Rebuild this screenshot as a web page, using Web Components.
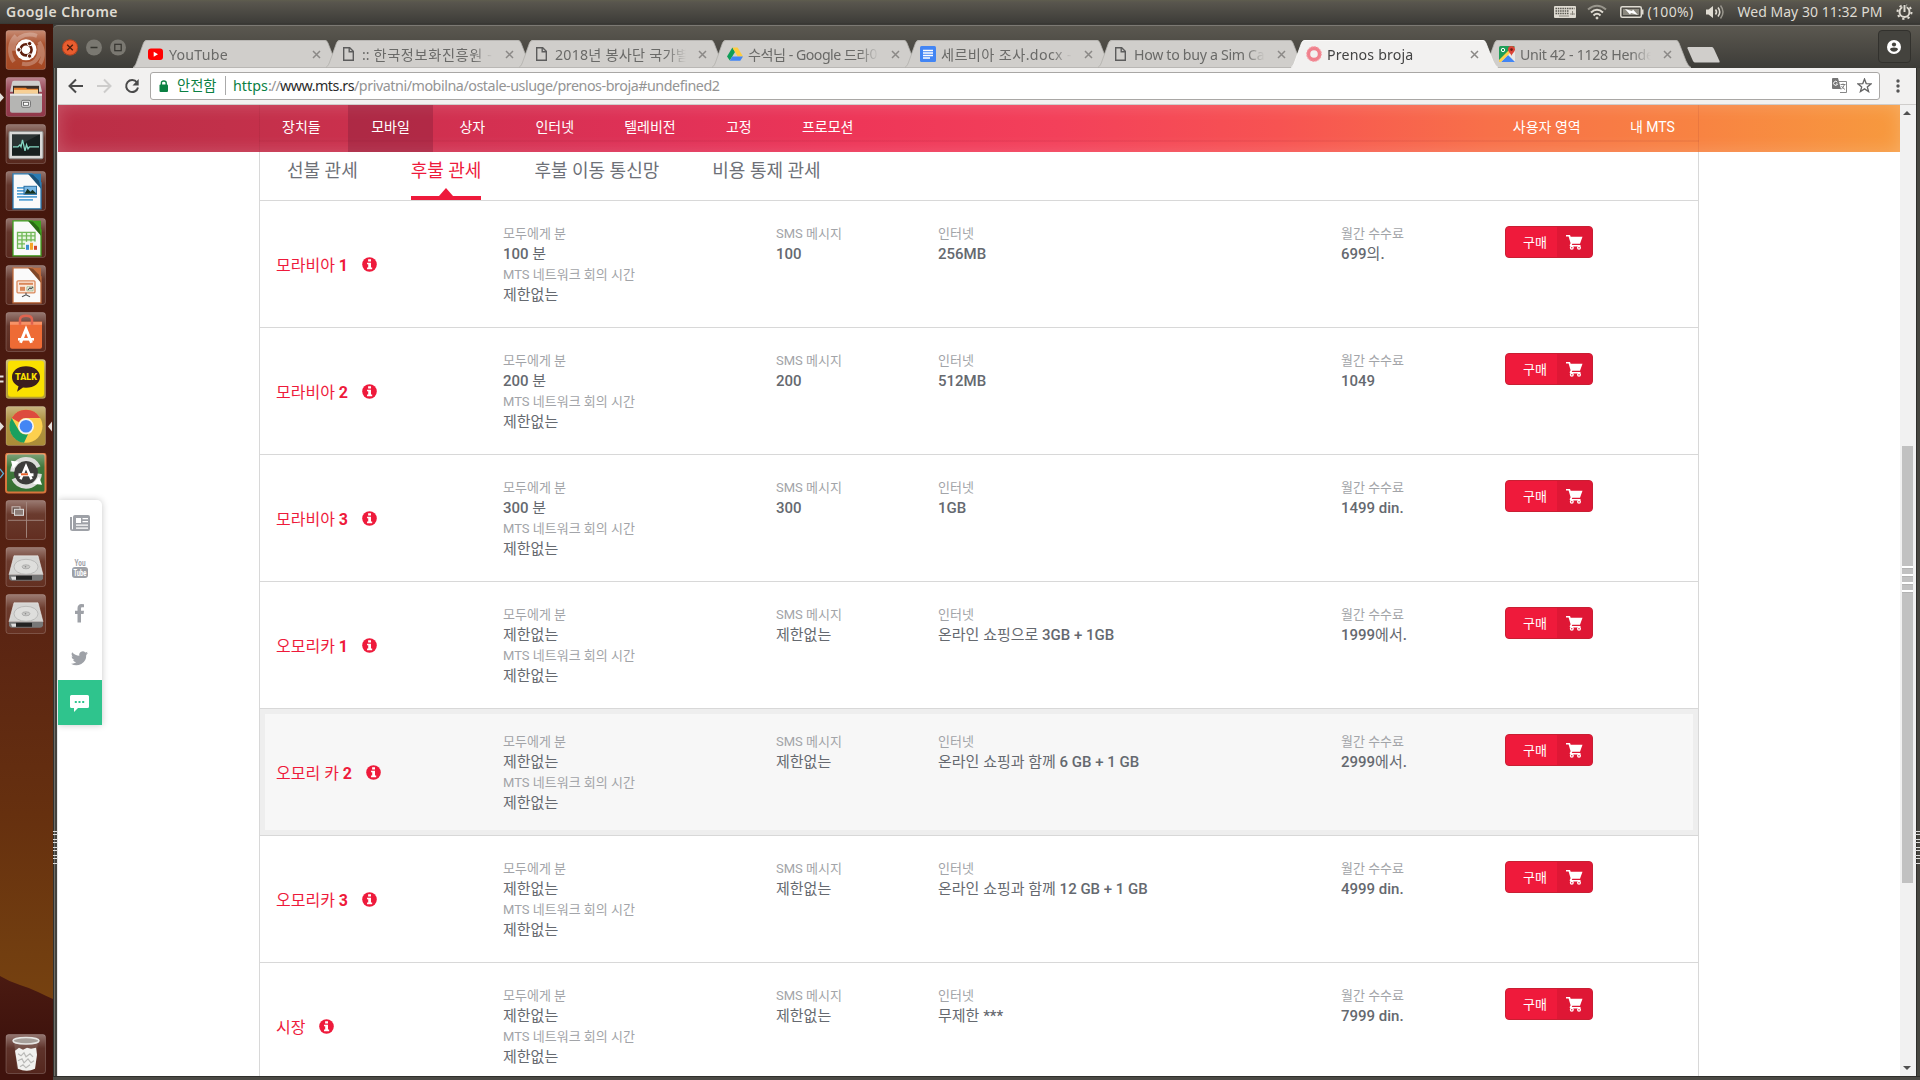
<!DOCTYPE html>
<html lang="ko">
<head>
<meta charset="utf-8">
<title>Prenos broja</title>
<style>
html,body{margin:0;height:1080px;width:1920px;overflow:hidden;background:#3c3b37;
font-family:Roboto,"Noto Sans CJK KR",sans-serif}
</style>
</head>
<body>
<desktop-shell></desktop-shell>
<script>
const UI='"Noto Sans","Noto Sans CJK KR",sans-serif';
function define(name,html,after){
  customElements.define(name,class extends HTMLElement{
    connectedCallback(){
      if(this.shadowRoot)return;
      const r=this.attachShadow({mode:'open'});
      r.innerHTML=typeof html==='function'?html(this):html;
      if(after)after(this,r);
    }
  });
}

/* Text whose tracking is tuned so that it spans the given width */
define('fit-text','<style>:host{display:inline-block;white-space:pre}</style><span><slot></slot></span>',(el,r)=>{
  const s=r.querySelector('span'),w=+el.getAttribute('w');
  const n=el.textContent.length;
  if(w)el.style.letterSpacing=((w-s.getBoundingClientRect().width)/n)+'px';
});

/* ---------- top panel ---------- */
define('os-panel',`<style>
:host{display:flex;height:24px;align-items:center;box-sizing:border-box;padding:0 7.500px 0 6px;color:#dfdbd2;
background:linear-gradient(#5f5d4e 0,#59564e 2px,#3d3c38 23px,#35342f);font:14px/24px ${UI}}
b{font-weight:600}.sp{flex:1}svg{display:block;flex:none}
</style>
<b><fit-text w="112">Google Chrome</fit-text></b><span class="sp"></span>
<svg width="22" height="14" viewBox="0 0 22 14"><rect y="1" width="22" height="12" rx="1" fill="#dfdbd2"/><path d="M1.500 3.500h19M1.500 6h13M1.500 8.500h13" stroke="#5a5851" stroke-width="1.500" stroke-dasharray="1.500 .8"/><path d="M16 9h5M18.500 6v4M5 11h10" stroke="#8b877e"/></svg>
<svg width="20" height="16" viewBox="0 0 20 16" style="margin-left:11px" fill="none" stroke-width="2"><path d="M1 5.500Q10-2 19 5.500" stroke="#98958c"/><path d="M4 8.500Q10 3 16 8.500" stroke="#dfdbd2"/><path d="M6.500 11.500Q10 8 13.500 11.500" stroke="#dfdbd2"/><circle cx="10" cy="14" r="1" fill="#dfdbd2" stroke="#dfdbd2" stroke-width="1"/></svg>
<svg width="24" height="14" viewBox="0 0 24 14" style="margin-left:13px"><rect x=".8" y="1.800" width="20.500" height="10.500" rx="1.500" fill="none" stroke="#dfdbd2" stroke-width="1.500"/><rect x="3" y="4" width="16" height="6" fill="#8c897f"/><path d="M22 4.500h1.500v5H22z" fill="#dfdbd2"/><path d="M5 4l7 2 1-1.500 5 5.500-7-2-1 1.500z" fill="#fff"/></svg>
<fit-text w="46" style="margin-left:4px">(100%)</fit-text>
<svg width="20" height="16" viewBox="0 0 20 16" style="margin-left:11px"><path d="M1 5.500h2.500L8 2v12L3.500 10.500H1z" fill="#dfdbd2"/><path d="M10.500 5.500q2 2.500 0 5M13 3.500q3.500 4.500 0 9" stroke="#dfdbd2" fill="none" stroke-width="1.600"/><path d="M15.500 1.500q5 6.500 0 13" stroke="#98958c" fill="none" stroke-width="1.500"/></svg>
<fit-text w="145" style="margin-left:13px">Wed May 30 11:32 PM</fit-text>
<svg width="17" height="18" viewBox="0 0 17 18" style="margin-left:13px" fill="none" stroke="#dfdbd2"><circle cx="8.500" cy="9" r="5" stroke-width="2"/><circle cx="8.500" cy="9" r="7" stroke-width="2" stroke-dasharray="2.300 3.200"/><path d="M8.500 1v8" stroke="#474640" stroke-width="4"/><path d="M8.500 2v7" stroke-width="2"/></svg>`);

/* ---------- launcher ---------- */
const doc=(c,inner)=>`<path d="M7 3h19l9 9v26H7z" fill="#fafafa" stroke="${c}" stroke-width="1.300"/><path d="M22 3h13v15z" fill="${c}"/><path d="M22 3l13 15-2-8-6-6z" fill="#0005"/>${inner}`;
const disk='<path d="M8 9h24l5 19H3z" fill="#d5d5d3" stroke="#eee" stroke-width=".6"/><path d="M3 28h34v4q-1 2-3 2H6q-2 0-3-2z" fill="#777"/><path d="M5 30h5v3H6z" fill="#ddd"/><path d="M10 29h16v4H10z" fill="#222"/><ellipse cx="20" cy="20" rx="12" ry="7.500" fill="#dededc" stroke="#b3b3b1" stroke-width=".8"/><ellipse cx="20" cy="20" rx="4" ry="2" fill="#c9c9c7" stroke="#999" stroke-width=".6"/><circle cx="19.500" cy="20" r=".8" fill="#888"/>';
const LICON={
ubuntu:'<path d="M7 21C7 9 18 2 31 6M33 15c3 14-6 21-17 19M10 6C3 12 2 24 8 32M34 34c4-6 4-15-1-22" stroke="#ffffff42" stroke-width="4" fill="none"/><circle cx="20" cy="20" r="10.500" fill="#fff"/><circle cx="20" cy="20" r="5.600" fill="none" stroke="#5e1f0e" stroke-width="2.600"/><g fill="#5e1f0e" stroke="#fff" stroke-width="1"><circle cx="12.800" cy="20" r="2.200"/><circle cx="23.600" cy="13.800" r="2.200"/><circle cx="23.600" cy="26.200" r="2.200"/></g>',
files:'<path d="M6 6q0-2 2-2h24q2 0 2 2l2 9H4z" fill="#cfcfcd"/><path d="M7 9h26v8H7z" fill="#3a2f28"/><path d="M8 11h12l1 1h11v5H8z" fill="#e8812c"/><path d="M8 13h24v5H8z" fill="#f6cf95"/><path d="M4 17h32v17q0 2-2 2H6q-2 0-2-2z" fill="#b5b5b3"/><path d="M4 17h32v2H4z" fill="#e8e8e6"/><rect x="15.500" y="23.500" width="9" height="7" rx="1.500" fill="#ddd" stroke="#777"/><rect x="17.500" y="25.500" width="5" height="3" fill="#fff" stroke="#555" stroke-width=".8"/>',
monitor:'<rect x="3" y="7.500" width="34" height="27.500" rx="1.500" fill="#d9d9d7" stroke="#8a8a88"/><rect x="6" y="10.500" width="28" height="21.500" fill="#17201f"/><path d="M6 10.500h28L6 25z" fill="#ffffff18"/><path d="M7 23h5l2-2 1 2 1.500-7 2.500 11 1.500-6 1.500 4 1.500-2H33" fill="none" stroke="#86d8c4" stroke-width="1.300"/>',
writer:doc('#2a7cb4','<path d="M11 17h20M11 20h20M11 23h20M11 26h20M13 29h14" stroke="#5aa4d6" stroke-width="1.800"/><rect x="18" y="15.500" width="12.500" height="8" fill="#79b7e4" stroke="#2a6ea2"/><path d="M18.500 23l3-5 3 3 2-2 4 4z" fill="#153321"/>'),
calc:doc('#3fa11f','<path d="M11 14h18v17H11z" fill="#e8f5e0"/><path d="M11 14.500h18M11 18h18M11 22h18M11 26h18M11 30.500h10M11.500 14v17M16 14v17M20.500 14v17M25 14v10M29 14v10" stroke="#71b857" stroke-width="1.300"/><rect x="19" y="24" width="12" height="8" fill="#f5f5f5"/><path d="M20 32v-5h3v5" fill="#3c8fd0"/><path d="M24 32v-7h3v7" fill="#f5a52b"/><path d="M28 32v-4h3v4" fill="#d3482c"/>'),
impress:doc('#bf6b3c','<rect x="11" y="16" width="18" height="12" rx="1" fill="#fbe7da" stroke="#d9875a" stroke-width="1.300"/><path d="M13 19h14" stroke="#d9875a" stroke-width="2"/><path d="M14 22h5v4h-5z" fill="#d9875a"/><path d="M21 22h6v4h-6z" fill="#fff" stroke="#6a9e62" stroke-width=".6"/><path d="M22 25l2-2 1 1 2-2M20 28v2M16 32l4-2 4 2" fill="none" stroke="#555" stroke-width="1.200"/>'),
store:'<path d="M4 10h32v25q0 2-2 2H6q-2 0-2-2z" fill="#ee6b35"/><path d="M4 10h32v3H4z" fill="#f79267"/><path d="M14 13V8q0-4 6-4t6 4v5" fill="none" stroke="#e0634f" stroke-width="2.500"/><path d="M14.500 31L20 17.500 25.500 31" fill="none" stroke="#fff" stroke-width="3"/><path d="M12 27.500h16" stroke="#fff" stroke-width="2.600"/>',
talk:'<rect x="2" y="2" width="36" height="36" rx="3" fill="#fae100"/><path d="M20 7.500c8.300 0 14 4.600 14 10.700S28.300 29 20 29l-3-.3L11 33l1.500-5.500C8.500 25.600 6 22.300 6 18.200 6 12.100 11.700 7.500 20 7.500z" fill="#3b1e1e"/><text x="20" y="21.500" text-anchor="middle" font-family="Roboto" font-weight="900" font-size="9" fill="#fae100">TALK</text>',
chrome:'<circle cx="20" cy="20.500" r="16.500" fill="#fdd04e"/><path d="M20 4a16.500 16.500 0 0 1 14.300 8.250H20a8.250 8.250 0 0 0-7.100 4.100L5.700 12.200A16.500 16.500 0 0 1 20 4z" fill="#dd4b3e"/><path d="M5.700 12.200L12.900 24.600A8.250 8.250 0 0 0 20 28.700a8 8 0 0 0 2-.3L18 37A16.500 16.500 0 0 1 5.700 12.200z" fill="#1aa05f"/><circle cx="20" cy="20.500" r="8" fill="#f4f4f4"/><circle cx="20" cy="20.500" r="6.300" fill="#4486f4"/>',
updater:'<circle cx="20" cy="20" r="12" fill="#3c3c3a"/><circle cx="20" cy="20" r="13.800" fill="none" stroke="#dcdcda" stroke-width="4.200" stroke-dasharray="36 7.350" stroke-dashoffset="-1"/><path d="M5 8l8 1-6 7zM36 32l-9-1 6-7z" fill="#fff"/><path d="M14.500 26.500L20 13.500l5.500 13" fill="none" stroke="#fff" stroke-width="2.600"/><path d="M12.500 22h15" stroke="#fff" stroke-width="3"/><path d="M15 21.500h7" stroke="#e9632c" stroke-width="2"/>',
workspace:'<path d="M20.500 2v36M2 20.500h36" stroke="#a58a82" stroke-width=".9"/><rect x="6" y="7" width="8" height="6.500" fill="#6d5750" stroke="#cbbdb8"/><rect x="8.500" y="9.500" width="9" height="6" fill="#8d7d78" stroke="#ddd"/>',
disk,
trash:'<path d="M8 8h24l-3 27q-9 4-18 0z" fill="#8d736c77"/><path d="M9 17l4-3 4 2 4-2 4 1 5-1 1 7-2 14q-8 4-17 0z" fill="#f1f1ef"/><path d="M12 20l3 2 3-3 2 4 4-3 3 3M12 27l4-2 2 4 4-4 3 4 3-2M14 33l3-2 3 3 4-3" fill="none" stroke="#b9b9b7" stroke-width="1.200"/><ellipse cx="20" cy="7" rx="13" ry="3.200" fill="#a7a09b" stroke="#e7e7e5" stroke-width="1.500"/>'};
define('launcher-item',el=>{
  const k=el.getAttribute('icon'),m=el.getAttribute('mark')||'';
  const marks={run:'<path d="M0 16l4 4.500-4 4.500z" fill="#e4e0dc"/>',two:'<path d="M0 17.500h3.500M0 22.500h3.500" stroke="#e4e0dc" stroke-width="2"/>',
    active:'<path d="M0 16l4 4.500-4 4.500z" fill="#e4e0dc"/><path d="M52 15.500l-4 5 4 5z" fill="#e4e0dc"/>',blue:'<path d="M0 16l3.500 4.500L0 25" fill="none" stroke="#5aaad0" stroke-width="1.300"/>'};
  return `<style>:host{display:block;height:41px}svg{display:block}</style>
<svg width="53" height="41" viewBox="0 0 53 41">
<defs><linearGradient id="g" x2="0" y2="1"><stop stop-color="#fff" stop-opacity=".38"/><stop offset=".35" stop-color="#fff" stop-opacity=".08"/><stop offset="1" stop-color="#fff" stop-opacity=".02"/></linearGradient></defs>
${marks[m]||''}<rect x="6" y=".5" width="39.500" height="39" rx="2.500" fill="${el.getAttribute('tint')||'#6d3a2c66'}" stroke="${k==='updater'?'#d8743a':'#ffffff30'}" ${k==='updater'?'stroke-width="2"':''}/>
<rect x="6" y=".5" width="39.500" height="39" rx="2.500" fill="url(#g)"/>
<g transform="translate(6,-.2)">${LICON[k]}</g></svg>`});
define('unity-launcher',`<style>
:host{display:flex;flex-direction:column;gap:6px;box-sizing:border-box;width:53px;height:1056px;padding:6px 0 5px;
background:linear-gradient(#401409 0,#4a1a10 330px,#5a2413 600px,#66300f 790px,#723e10 930px,#784310 1000px)}
.sp{flex:1;display:flex;align-items:flex-end;margin:0 0 -53px}.sp svg{display:block}
launcher-item{position:relative}
</style>
<launcher-item icon="ubuntu" tint="#a4441e"></launcher-item><launcher-item icon="files" tint="#8f3446" mark="run"></launcher-item>
<launcher-item icon="monitor"></launcher-item><launcher-item icon="writer"></launcher-item><launcher-item icon="calc"></launcher-item>
<launcher-item icon="impress"></launcher-item><launcher-item icon="store"></launcher-item>
<launcher-item icon="talk" tint="#b39d2e" mark="two"></launcher-item><launcher-item icon="chrome" tint="#a98a33" mark="active"></launcher-item>
<launcher-item icon="updater" tint="#2f6d2c" mark="blue"></launcher-item><launcher-item icon="workspace"></launcher-item>
<launcher-item icon="disk"></launcher-item><launcher-item icon="disk"></launcher-item>
<div class="sp"><svg width="53" height="110" viewBox="0 0 53 110"><defs><linearGradient id="h" x2="0" y2="1"><stop stop-color="#4a1a11"/><stop offset=".6" stop-color="#3f130d"/></linearGradient></defs><path d="M0 5Q10 11 20 14T38 21T53 28V110H0z" fill="url(#h)"/></svg></div>
<launcher-item icon="trash"></launcher-item>`);

/* ---------- browser tabs ---------- */
const page='<svg width="15" height="16" viewBox="0 0 15 16"><path d="M2.700 1.700h6l3.600 3.600v9H2.700z" fill="none" stroke="#5c5c5c" stroke-width="1.400"/><path d="M8.200 1.700v4h4" fill="none" stroke="#5c5c5c" stroke-width="1.400"/></svg>';
const FAV={page,
yt:'<svg width="15" height="16" viewBox="0 0 15 16"><rect y="2.500" width="15" height="11.500" rx="3" fill="#f00"/><path d="M5.700 5.700l4.300 2.500-4.300 2.600z" fill="#fff"/></svg>',
drive:'<svg width="16" height="16" viewBox="0 0 16 16"><path d="M5.400 1.500L8 6 2.800 14.500 0 10.500z" fill="#0f9d58"/><path d="M5.400 1.500h5.200l5.400 9h-5.300z" fill="#ffcd40"/><path d="M5.200 10.500H16l-2.700 4.200H2.800z" fill="#4285f4"/></svg>',
docs:'<svg width="16" height="16" viewBox="0 0 16 16"><rect width="16" height="16" rx="1.500" fill="#4285f4"/><path d="M3 4.500h10M3 7h10M3 9.500h10M3 12h7" stroke="#fff" stroke-width="1.300"/></svg>',
mts:'<svg width="16" height="16" viewBox="0 0 16 16"><circle cx="8" cy="8" r="5.600" fill="none" stroke="#f0808c" stroke-width="3.600"/><circle cx="8" cy="8" r="7.300" fill="none" stroke="#f5a3ab" stroke-width="1.200" stroke-dasharray="1.500 1.370"/></svg>',
maps:'<svg width="16" height="16" viewBox="0 0 16 16"><rect width="16" height="16" rx="1.500" fill="#1e9e58"/><path d="M0 16L16 1v15z" fill="#e9e9e7"/><path d="M9 9l7 7H2z" fill="#4285f4"/><path d="M0 14L11 3l2 2L2 16H0z" fill="#ffd04b"/><circle cx="4" cy="4" r="1.700" fill="none" stroke="#fff"/><path d="M12.500 0a3.500 3.500 0 0 1 3.500 3.600c0 2.400-2.600 3.400-3.500 6.400-.9-3-3.500-4-3.500-6.400A3.500 3.500 0 0 1 12.500 0z" fill="#db4437"/><circle cx="12.500" cy="3.600" r="1.300" fill="#6e1a12"/></svg>'};
define('browser-tab',el=>{
 const on=el.hasAttribute('active');
 return `<style>
:host{display:flex;position:relative;z-index:${on?2:1};width:193px;height:28px;box-sizing:border-box;padding-left:15px;align-items:center;flex:none;color:${on?'#444':'#6a6a68'};font:14.200px/27px ${UI}}
.bg{position:absolute;left:0;top:0}
.ic{width:16px;margin-right:5px;position:relative;display:flex}
.t{width:131px;overflow:hidden;white-space:pre;position:relative;-webkit-mask:linear-gradient(90deg,#000 111px,transparent 131px)}
.x{margin-left:12px;position:relative;display:block;margin-top:0}
</style>
<svg class="bg" width="208" height="28" viewBox="0 0 208 28"><path d="M0 28C2 26 3 24 4 21L10.500 3Q11.500 0 14 0H192Q194 0 195 3L202 21Q204 26 207 28z" fill="${on?'#f2f1f0':'#d0cecb'}"/><path d="M0 27.500C2 26 3 24 4 21L10.500 3Q11.500.5 14 .5H192Q194 .5 195 3L202 21Q204 26 207 27.500${on?'':'z'}" fill="none" stroke="${on?'#fbfbfa':'#b3b1ad'}" stroke-width=".8"/></svg>
<span class="ic">${FAV[el.getAttribute('icon')]}</span><span class="t"><slot></slot></span>
<svg class="x" width="9" height="9" viewBox="0 0 9 9"><path d="M1 1l7 7M8 1L1 8" stroke="#8b8987" stroke-width="1.500"/></svg>`});
define('tab-strip',`<style>
:host{display:flex;height:43px;background:linear-gradient(#5b5850,#3d3c38);border-radius:5px 0 0 0;box-sizing:border-box;border-top:1px solid #7c7973;align-items:flex-end;overflow:hidden}
.w{display:flex;gap:8px;width:80px;padding:0 0 12px 9px;box-sizing:border-box}
.w svg{display:block}.sp{flex:1}
.n{margin:0 0 5px 10px;display:block}
.u{width:33px;height:33px;border:1px solid #32312d;border-radius:4px;margin:0 9.500px 5px 0;box-sizing:border-box;background:#44433e;display:flex;align-items:center;justify-content:center}
</style>
<div class="w">
<svg width="16" height="17" viewBox="0 0 16 17"><circle cx="8" cy="8.500" r="8" fill="#ea5d2f"/><circle cx="8" cy="8.500" r="7.600" fill="none" stroke="#8b3217" stroke-width=".6"/><path d="M5.200 5.700l5.600 5.600M10.800 5.700l-5.600 5.600" stroke="#4d1d0c" stroke-width="1.300"/></svg>
<svg width="16" height="17" viewBox="0 0 16 17"><circle cx="8" cy="8.500" r="8" fill="#7a7871"/><path d="M4.500 8.500h7" stroke="#35342f" stroke-width="1.300"/></svg>
<svg width="16" height="17" viewBox="0 0 16 17"><circle cx="8" cy="8.500" r="8" fill="#7a7871"/><rect x="4.800" y="5.300" width="6.400" height="6.400" fill="none" stroke="#35342f" stroke-width="1.200"/></svg>
</div>
<browser-tab icon="yt"><fit-text w="59">YouTube</fit-text></browser-tab>
<browser-tab icon="page"><fit-text w="11.500">:: </fit-text><fit-text w="119">한국정보화진흥원 -</fit-text></browser-tab>
<browser-tab icon="page"><fit-text w="134">2018년 봉사단 국가별</fit-text></browser-tab>
<browser-tab icon="drive"><fit-text w="146">수석님 - Google 드라이브</fit-text></browser-tab>
<browser-tab icon="docs"><fit-text w="131">세르비아 조사.docx -</fit-text></browser-tab>
<browser-tab icon="page"><fit-text w="144">How to buy a Sim Card</fit-text></browser-tab>
<browser-tab icon="mts" active><fit-text w="86.500">Prenos broja</fit-text></browser-tab>
<browser-tab icon="maps"><fit-text w="154">Unit 42 - 1128 Henderso</fit-text></browser-tab>
<svg class="n" width="34" height="16" viewBox="0 0 34 16"><path d="M1 0H25Q26 0 27 2L32.500 14Q33 15.500 32 15.500H8Q7 15.500 6 14L.5 1.500Q.2.200 1 0z" fill="#d0cecb"/></svg>
<span class="sp"></span>
<div class="u"><svg width="14" height="14" viewBox="0 0 14 14"><circle cx="7" cy="7" r="7" fill="#fff"/><circle cx="7" cy="4.500" r="2.100" fill="#44433e"/><path d="M3 9.500q0-2 4-2t4 2q-1.500 2.300-4 2.300T3 9.500z" fill="#44433e"/></svg></div>`);

/* ---------- toolbar ---------- */
define('browser-toolbar',`<style>
:host{display:flex;height:37px;box-sizing:border-box;background:#f2f1f0;border-bottom:1px solid #cfcdcb;align-items:center;padding:0 0 1px 10px;font:14.300px/26px ${UI}}
svg{display:block;flex:none}
.o{flex:1;display:flex;align-items:center;height:28px;box-sizing:border-box;border:1px solid #a9a7a5;border-radius:3px;background:#fff;margin-left:10px;padding:0 9px 0 8px;color:#949494;white-space:pre}
.g{color:#0b8043}.d{color:#2b2b2b}.s{flex:1}i{width:1px;height:19px;background:#aaa;margin:0 7px 0 9px}
.m{width:36px;display:flex;justify-content:center}
</style>
<svg width="16" height="16" viewBox="0 0 16 16" fill="none" stroke="#4a4a4a" stroke-width="2"><path d="M15 8H2M8 1.500L1.500 8 8 14.500"/></svg>
<svg width="16" height="16" viewBox="0 0 16 16" fill="none" stroke="#cdcccb" stroke-width="2" style="margin-left:12px"><path d="M1 8h13M8 1.500L14.500 8 8 14.500"/></svg>
<svg width="16" height="16" viewBox="0 0 16 16" fill="none" stroke="#4a4a4a" stroke-width="2" style="margin-left:12px"><path d="M13 4.500A6 6 0 1 0 14 9.500"/><path d="M14.700 1v6.500H8.500z" fill="#4a4a4a" stroke="none"/></svg>
<div class="o">
<svg width="10" height="12" viewBox="0 0 10 12"><rect x=".5" y="4.500" width="8.500" height="7.500" rx="1" fill="#0b8043"/><path d="M2.400 5V3q0-2 2.400-2t2.400 2v2" fill="none" stroke="#0b8043" stroke-width="1.400"/></svg>
<span class="g" style="margin-left:8px;width:39px">안전함</span><i></i>
<fit-text class="g" w="35">https</fit-text><fit-text w="12">://</fit-text><fit-text class="d" w="74">www.mts.rs</fit-text><fit-text w="365.500">/privatni/mobilna/ostale-usluge/prenos-broja#undefined2</fit-text>
<span class="s"></span>
<svg width="15" height="15" viewBox="0 0 15 15"><path d="M0 1q0-1 1-1h5l3 11H1q-1 0-1-1z" fill="#757575"/><path d="M7 3.500h7.500v11H8" fill="none" stroke="#888"/><path d="M5.300 4.200A2 2 0 1 0 5.500 6H4" fill="none" stroke="#fff"/><path d="M8.500 6.500h5M11 5.500v1M12.500 6.500q-1 3-3.500 5M9.500 8q1 2 3.500 3.500" fill="none" stroke="#777" stroke-width=".9"/></svg>
<svg width="15" height="15" viewBox="0 0 15 15" style="margin:0 -2px 0 10px"><path d="M7.500 1l1.700 4.600 4.900.2-3.800 3.100 1.300 4.700-4.100-2.700-4.100 2.700 1.300-4.700L.9 5.800l4.900-.2z" fill="none" stroke="#666" stroke-width="1.300"/></svg>
</div>
<div class="m"><svg width="4" height="14" viewBox="0 0 4 14" fill="#555"><circle cx="2" cy="2" r="1.700"/><circle cx="2" cy="7" r="1.700"/><circle cx="2" cy="12" r="1.700"/></svg></div>`);

/* ---------- site ---------- */
define('site-nav',`<style>
:host{display:flex;height:47px;box-sizing:border-box;padding:0 201px 0 201px;color:#fff;font:14px/44px Roboto,"Noto Sans CJK KR",sans-serif;
box-shadow:inset 0 0 18px rgba(255,255,255,.2);
background:linear-gradient(90deg,rgba(110,20,30,.12) 1px,transparent 1px 1439px,rgba(110,20,30,.1) 1439px) 201px 0/1440px 47px no-repeat,
linear-gradient(rgba(120,20,40,.07),rgba(120,20,40,.07)) 201px 35px/1440px 2px no-repeat,
linear-gradient(90deg,#ba2e45 0,#c2304a 170px,#d0304f 375px,#e03157 600px,#ee3658 800px,#f3405a 1000px,#f75352 1220px,#f87049 1430px,#f88342 1640px,#f79a3e 1842px)}
span{padding:0 23px;margin-right:4.200px;white-space:pre}.on{background:rgba(120,30,55,.35)}i{flex:1}
</style><span style="padding-right:23.300px">장치들</span><span class="on">모바일</span><span style="margin-left:-.5px">상자</span><span>인터넷</span><span>텔레비전</span><span>고정</span><span>프로모션</span><i></i><span style="padding-right:22px">사용자 영역</span><span style="padding-right:20px">내 MTS</span>`);
define('tariff-tabs',`<style>
:host{display:flex;gap:53px;height:48px;padding-left:27px;font:18px/38px Roboto,"Noto Sans CJK KR",sans-serif;color:#6d7077}
span{white-space:pre;height:48px;box-sizing:border-box}
.on{color:#ee1a3b;position:relative;border-bottom:4px solid #ee1a3b}
.on:after{content:"";position:absolute;left:50%;margin-left:-7px;bottom:0;border:7.500px solid transparent;border-top:0;border-bottom:8px solid #ee1a3b}
</style><span>선불 관세</span><span class="on">후불 관세</span><span>후불 이동 통신망</span><span>비용 통제 관세</span>`);
define('buy-button',`<style>
:host{display:flex;width:88px;height:32px;box-sizing:border-box;border:1px solid #c91f33;border-radius:4px;overflow:hidden;background:#ef1a3b;color:#fff;font:13px/31px Roboto,"Noto Sans CJK KR",sans-serif}
span{width:51px;padding-left:17px;box-sizing:border-box}
div{flex:1;background:#df1735;display:flex;align-items:center;justify-content:center}
</style><span><slot></slot></span><div><svg width="17" height="15" viewBox="0 0 17 15"><path d="M0 0h4l.7 1.800H16.500L14 8.800H6.300L5.800 10H14.500v1.500H4.200L3.600 10.300l1-2L2.600 1.500H0z" fill="#fff"/><circle cx="5.800" cy="12.700" r="2" fill="#fff"/><circle cx="13" cy="12.700" r="2" fill="#fff"/><circle cx="5.800" cy="12.700" r=".7" fill="#df1735"/><circle cx="13" cy="12.700" r=".7" fill="#df1735"/></svg></div>`);
define('tariff-row',el=>{
 /* Hangul runs take the regular weight, Latin runs keep the medium one */
 const a=n=>(el.getAttribute(n)||'').replace(/[\uac00-\ud7a3]+/g,'<em>$&</em>');
 return `<style>
:host{display:grid;grid-template-columns:227px 273px 162px 403px 164px 1fr;height:127px;box-sizing:border-box;border-top:1px solid #d8d8d8;padding:22px 0 0 16px;font:500 15px/20.500px Roboto,"Noto Sans CJK KR",sans-serif;color:#65696f}
:host([hover]){background:#f7f7f7;box-shadow:inset 0 0 0 5px #eee}
em{font-style:normal;font-weight:400}
small{display:block;font-size:13px;font-weight:400;color:#a2a4a8;line-height:22px;height:20.500px}
.n{color:#ee1a3b;font-size:16px;display:flex;padding-top:33px;align-items:center;height:21px}
.n b{font-weight:700;white-space:pre}
.n svg{margin:-4px 0 0 14px}
buy-button{margin-top:3px}div{white-space:pre}
</style>
<div class="n"><span>${a('name')}</span><b>${a('num')?' '+a('num'):''}</b><svg width="15" height="15" viewBox="0 0 14 14"><circle cx="7" cy="7" r="6.800" fill="#ee1a3b"/><path d="M5.700 2h2.700v2.200H5.700zM4.700 5.300h3.700v4.600h1.100v1.500H4.700V9.900h1.100V6.800H4.700z" fill="#fff"/></svg></div>
<div><small>모두에게 분</small>${a('min')}<small>MTS 네트워크 회의 시간</small><em>제한없는</em></div>
<div><small>SMS 메시지</small>${a('sms')}</div>
<div><small>인터넷</small>${a('net')}</div>
<div><small>월간 수수료</small>${a('fee')}</div>
<div><buy-button>구매</buy-button></div>`});
define('side-dock',`<style>
:host{position:absolute;left:0;top:395px;width:44px;height:225px;background:#fff;border-radius:0 5px 0 0;box-shadow:0 0 7px rgba(0,0,0,.22);display:flex;flex-direction:column}
div{height:45px;display:flex;align-items:center;justify-content:center;box-sizing:border-box;padding:1px 1px 0 0}.c{background:#2fc48d}
svg{overflow:visible}
</style>
<div><svg width="20" height="17" viewBox="0 0 20 17"><path d="M5 0h13q2 0 2 2v12q0 2-2 2H2.500Q0 16 0 13.500V2h2v11.500q0 1 1 1V2q0-2 2-2z" fill="#9ea1a7"/><path d="M6 3h5v5H6zM12.500 3H18v1.300h-5.500zM12.500 6H18v1.300h-5.500zM6 9.500h12v1.300H6zM6 12.500h12v1.300H6z" fill="#fff"/></svg></div>
<div><svg width="18" height="24" viewBox="0 -2 18 24" font-family="Roboto" font-weight="700" fill="#9ea1a7"><text x="3.500" y="8" font-size="9" textLength="11" lengthAdjust="spacingAndGlyphs">You</text><rect x="1" y="9" width="16" height="11" rx="3"/><text x="2.500" y="18" font-size="9.500" fill="#fff" textLength="13" lengthAdjust="spacingAndGlyphs">Tube</text></svg></div>
<div><svg width="10" height="19" viewBox="0 0 10 19"><path d="M9 .2V3.300H7.200C6.100 3.300 6 4 6 4.800V6.700h3l-.4 3.300H6v8.500H2.500V10H0V6.700h2.500V4.300C2.500 1.700 4 0 6.500 0z" fill="#9ea1a7"/></svg></div>
<div><svg width="17" height="15" viewBox="0 0 24 20"><path d="M23.900 2.400a10 10 0 0 1-2.800.8A4.900 4.900 0 0 0 23.300.4a10 10 0 0 1-3.100 1.200 4.900 4.900 0 0 0-8.400 4.500A14 14 0 0 1 1.700 1a4.900 4.900 0 0 0 1.500 6.500A4.900 4.900 0 0 1 1 6.900a4.900 4.900 0 0 0 3.900 4.900 5 5 0 0 1-2.200.1 4.900 4.900 0 0 0 4.600 3.400A9.900 9.900 0 0 1 0 17.300a14 14 0 0 0 21.500-12.400 10 10 0 0 0 2.400-2.500z" fill="#9ea1a7"/></svg></div>
<div class="c"><svg width="19" height="17" viewBox="0 0 19 17"><path d="M1.500 0h16q1.500 0 1.500 1.500v10q0 1.500-1.500 1.500H8l-4 4v-4H1.500Q0 13 0 11.500v-10Q0 0 1.500 0z" fill="#fff"/><path d="M4.800 6h2v2h-2zM8.500 6h2v2h-2zM12.200 6h2v2h-2z" fill="#2fc48d"/></svg></div>`);
define('scroll-bar',`<style>
:host{display:flex;flex-direction:column;width:16px;background:#f1f1f1}
.a{height:16px;display:flex;align-items:center;justify-content:center;padding-right:2px}
.t{margin:325px 0 0 2px;width:11px;height:437px;background:#c1c1c1;display:flex;flex-direction:column;align-items:center;box-sizing:border-box;padding-top:120px;gap:6px}
.t b{width:11px;height:2px;background:#fff;box-shadow:0 1px #9995}.s{flex:1}
</style><div class="a"><svg width="8" height="4"><path d="M0 4l4-4 4 4z" fill="#505050"/></svg></div>
<div class="t"><b></b><b></b><b></b><b></b></div><i class="s"></i><div class="a"><svg width="8" height="4"><path d="M0 0l4 4 4-4z" fill="#505050"/></svg></div>`);
define('web-page',`<style>
:host{display:flex;height:971px;background:#fff;position:relative;overflow:hidden}
.v{width:1842px;height:971px;overflow:hidden;background:#fff}
.c{width:1440px;box-sizing:border-box;margin-left:201px;border:solid #d8d8d8;border-width:0 1px;height:924px;overflow:hidden}
</style>
<div class="v"><site-nav></site-nav><div class="c"><tariff-tabs></tariff-tabs>
<tariff-row name="모라비아" num="1" min="100 분" sms="100" net="256MB" fee="699의."></tariff-row>
<tariff-row name="모라비아" num="2" min="200 분" sms="200" net="512MB" fee="1049"></tariff-row>
<tariff-row name="모라비아" num="3" min="300 분" sms="300" net="1GB" fee="1499 din."></tariff-row>
<tariff-row name="오모리카" num="1" min="제한없는" sms="제한없는" net="온라인 쇼핑으로 3GB + 1GB" fee="1999에서."></tariff-row>
<tariff-row hover name="오모리 카" num="2" min="제한없는" sms="제한없는" net="온라인 쇼핑과 함께 6 GB + 1 GB" fee="2999에서."></tariff-row>
<tariff-row name="오모리카" num="3" min="제한없는" sms="제한없는" net="온라인 쇼핑과 함께 12 GB + 1 GB" fee="4999 din."></tariff-row>
<tariff-row name="시장" min="제한없는" sms="제한없는" net="무제한 ***" fee="7999 din."></tariff-row>
</div></div><scroll-bar></scroll-bar><side-dock></side-dock>`);

define('window-grip','<style>:host{display:flex;flex-direction:column;gap:2px;position:absolute;top:807px;width:5px}i{height:1px;background:#ddd}i:nth-of-type(even){margin-bottom:2px}</style>'+'<i></i>'.repeat(9));
define('browser-window',`<style>
:host{display:block;position:relative;flex:1;height:1056px;background:#3c3b37;overflow:hidden}
.b{display:flex}.l{width:5px;background:linear-gradient(90deg,#32322f 0 1px,#6e6d67 1px 2px,#43423d 2px 4px,#e8e8e8 4px)}
.r{width:4px;background:linear-gradient(90deg,#2f2e2b 0 1px,#474640 1px)}
.m{width:1858px}.f{height:5px;background:linear-gradient(#2f2e2b 0 1px,#4b4944 1px)}
tab-strip{margin-top:1px}
</style><tab-strip></tab-strip>
<div class="b"><div class="l"></div><div class="m"><browser-toolbar></browser-toolbar><web-page></web-page></div><div class="r"></div></div><div class="f"></div>
<window-grip style="left:0"></window-grip><window-grip style="right:0"></window-grip>`);
define('desktop-shell',`<style>:host{display:block;width:1920px;height:1080px;overflow:hidden}div{display:flex}</style><os-panel></os-panel><div><unity-launcher></unity-launcher><browser-window></browser-window></div>`);
</script>
</body>
</html>
